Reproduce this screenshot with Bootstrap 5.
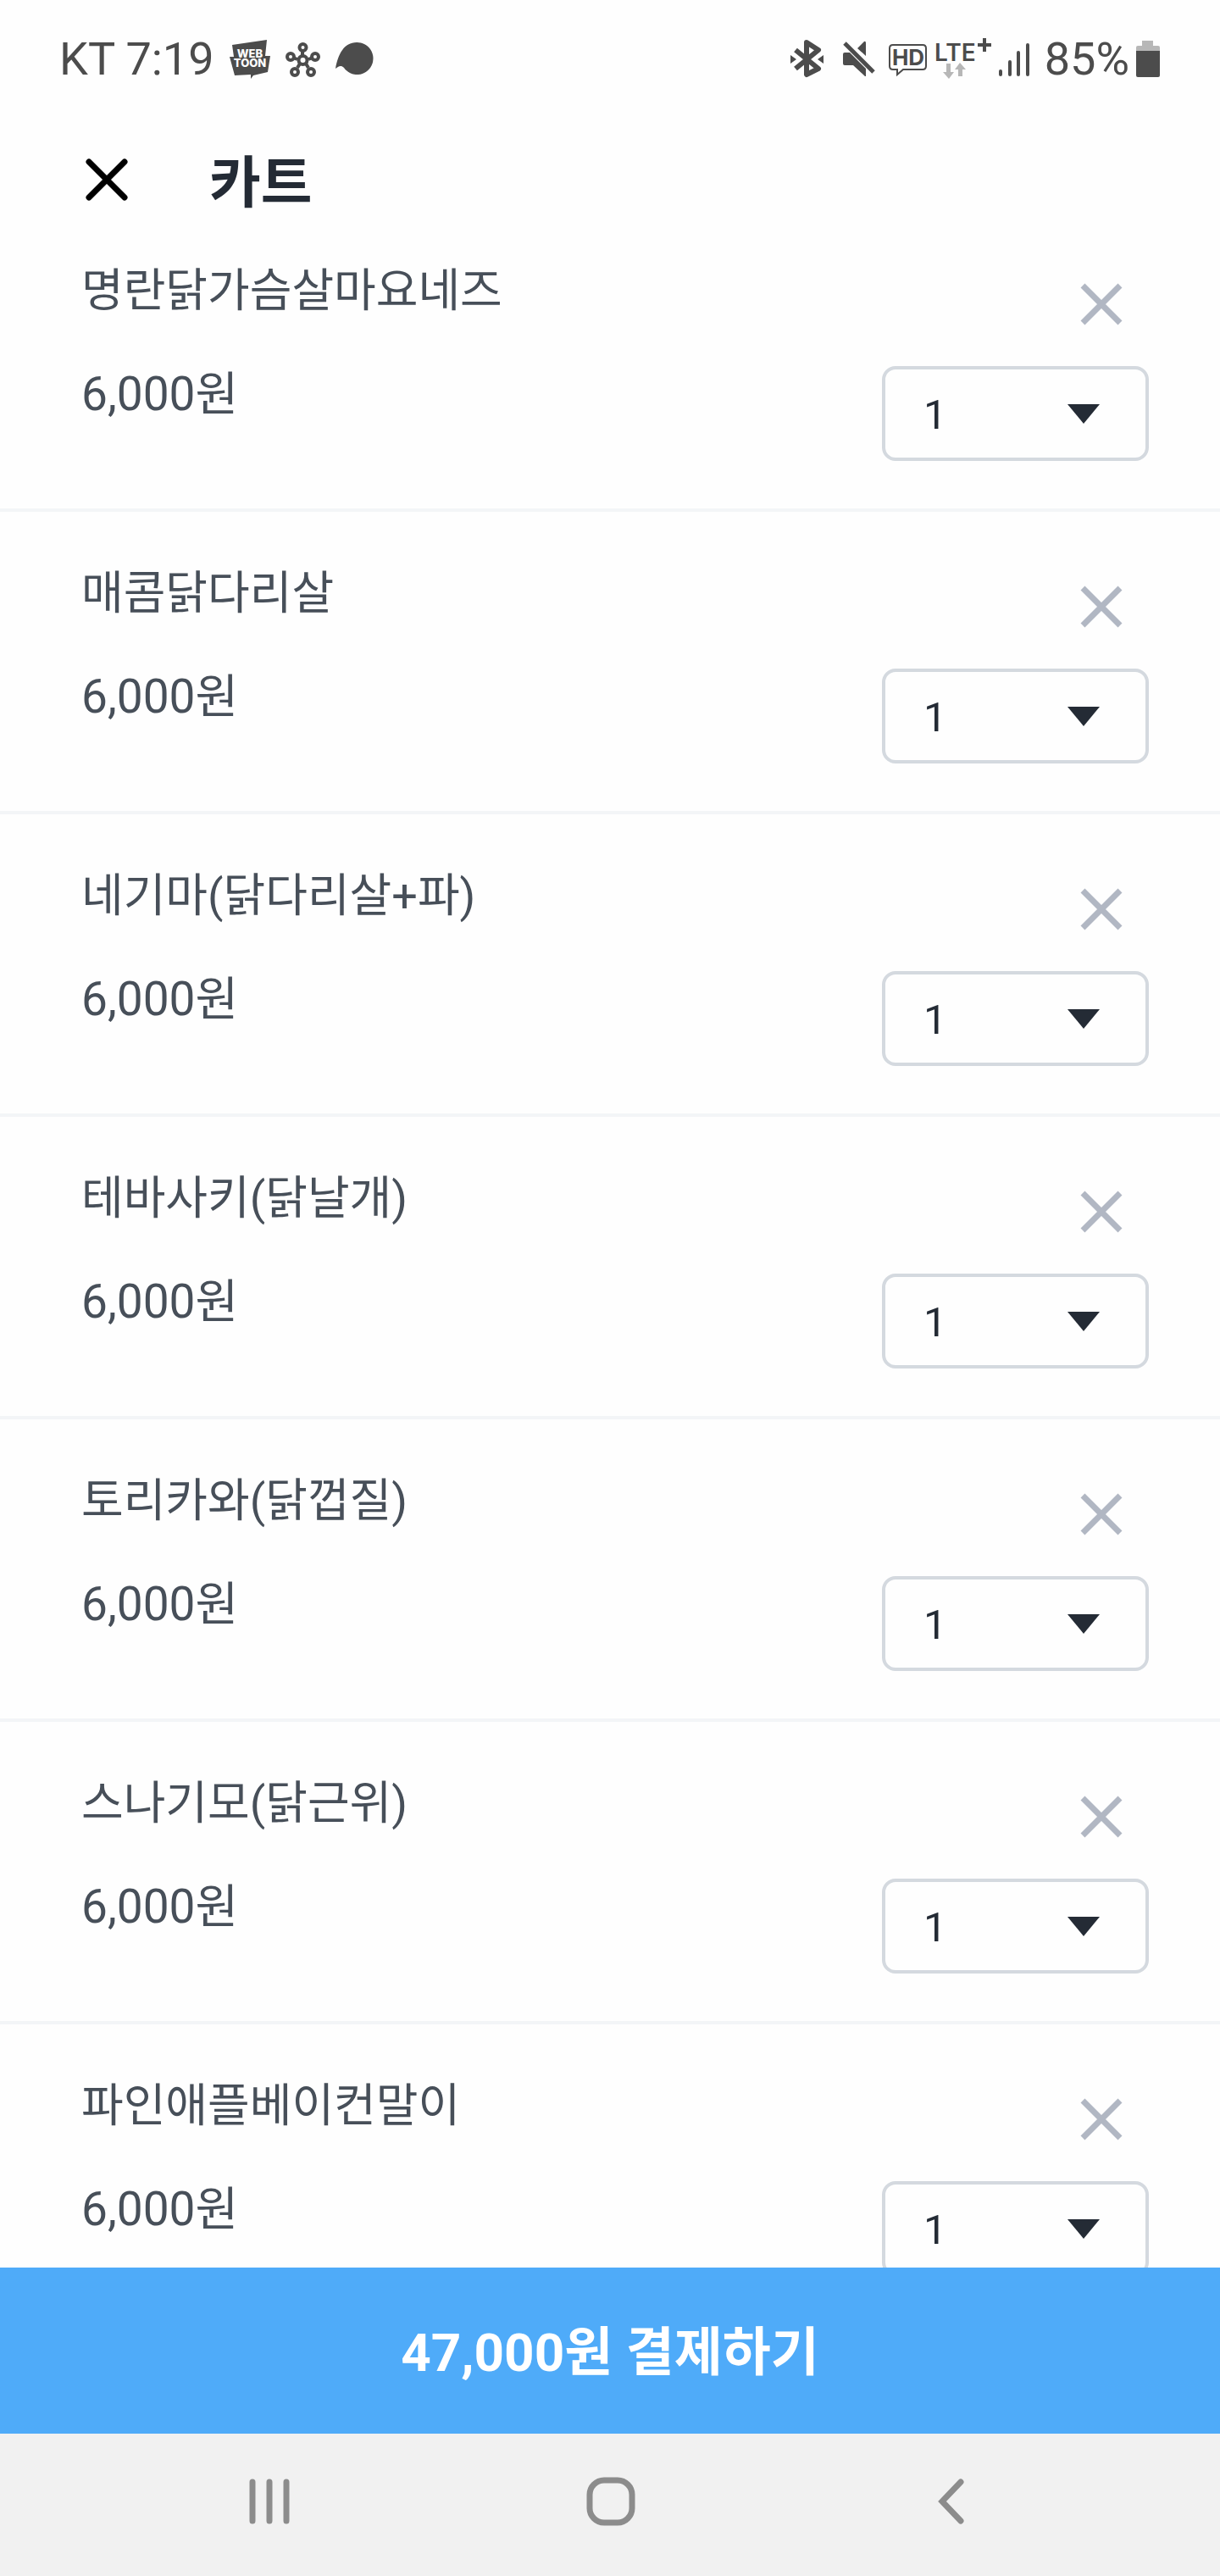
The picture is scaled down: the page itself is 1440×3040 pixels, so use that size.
<!DOCTYPE html>
<html lang="ko">
<head>
<meta charset="utf-8">
<meta name="viewport" content="width=device-width, initial-scale=1">
<title>카트</title>
<link rel="stylesheet" href="https://cdn.jsdelivr.net/npm/bootstrap@5.3.0/dist/css/bootstrap.min.css">
<style>
  body { font-family: Roboto, "Noto Sans CJK KR", sans-serif; background: #fefefe; color: #242b35; }
  svg { display: block; flex: none; overflow: visible; }
  .status-bar { height: 140px; padding: 0 71px 0 70px; font-size: 54px; line-height: 60px; color: #4c4c4c; }
  .status-left { gap: 16px; }
  .status-icons { gap: 8px; }
  .status-icons .wide-gap { margin-left: 12px; }
  .app-header { height: 107px; padding: 0 97px; gap: 92px; }
  .app-title { font-size: 66px; line-height: 60px; font-weight: 700; }
  .icon-btn { padding: 0; border: 0; background: none; }
  .list-area { min-height: 0; }
  .cart-item { padding: 61px 84px 56px 96px; border-bottom: 4px solid #f3f5f7; }
  .item-text { gap: 49px; color: #474f59; }
  .item-name { font-size: 54px; line-height: 72px; }
  .item-price { font-size: 55px; line-height: 72px; }
  .item-actions { padding-top: 15px; gap: 37px; }
  .remove-btn { margin-right: 20px; }
  .qty-select {
    width: 315px; height: 112px; padding: 4px 100px 0 45px;
    border: 4px solid #d4d9df; border-radius: 16px; color: #242b35;
    font-size: 49px; line-height: 60px;
    background-image: url("data:image/svg+xml,%3Csvg xmlns='http://www.w3.org/2000/svg' viewBox='0 0 38 23'%3E%3Cpath fill='%23242b35' d='M0 0H38L19 23Z'/%3E%3C/svg%3E");
    background-position: right 54px center; background-size: 38px 23px; background-color: #fefefe;
  }
  .pay-btn, .pay-btn:hover { height: 196px; padding: 6px 0 0; font-size: 62px; line-height: 72px; font-weight: 700; background: #4fabf9; color: #fff; border: 0; }
  .system-nav { height: 168px; padding: 0 117px 8px; background: #f1f1f1; }
</style>
</head>
<body>
<div class="d-flex flex-column vh-100 overflow-hidden">
  <div class="status-bar d-flex align-items-center justify-content-between flex-shrink-0">
    <div class="status-left d-flex align-items-center">
      <span>KT 7:19</span>
      <svg width="51" height="56" viewBox="269 40 51 56" role="img" aria-label="WEBTOON">
        <path fill="#4c4c4c" d="M274 51 315 45 313 64H319L316 83 299 87 296 91V86L277 87 271 65H276Z"/>
        <g fill="#fefefe" font-family="Inter, sans-serif" font-weight="800" text-anchor="middle">
          <text x="295" y="66" font-size="13">WEB</text><text x="295" y="77" font-size="13">TOON</text>
        </g>
      </svg>
      <svg width="44" height="56" viewBox="336 40 44 56" fill="none" stroke="#4c4c4c" stroke-width="4">
        <path d="M357 58V64M346 66 351 68M369 66 364 68M351 78 354 73M364 78 361 73"/>
        <circle cx="357.500" cy="69" r="5"/><circle cx="357.500" cy="54" r="4"/><circle cx="343" cy="65" r="4"/><circle cx="372" cy="65" r="4"/><circle cx="348" cy="83" r="4"/><circle cx="367" cy="83" r="4"/>
      </svg>
      <svg width="46" height="56" viewBox="396 40 46 56" fill="#4c4c4c"><path d="M421 48A19 19 0 1 1 406 78C402 74 399 77 396 79 399 62 406 48 421 48Z"/></svg>
    </div>
    <div class="status-icons d-flex align-items-center">
      <svg width="40" height="56" viewBox="932 40 40 56" fill="none" stroke="#4c4c4c" stroke-width="6">
        <path stroke-linejoin="round" d="M938 57 965 79 951 86V48L965 57 938 79"/>
        <path fill="#4c4c4c" stroke="none" d="M932 63 939 68 932 73ZM971 63 964 68 971 73Z"/>
      </svg>
      <svg class="wide-gap" width="40" height="56" viewBox="993 40 40 56" fill="#4c4c4c">
        <path d="M997 60H1003L1022 79V88H1021L1007 75H997Q995 75 995 73V62Q995 60 997 60ZM1012 55 1020 47Q1022 46 1022 49V64Z"/>
        <path stroke="#4c4c4c" stroke-width="5" d="M997 49 1031 83"/>
      </svg>
      <svg width="54" height="56" viewBox="1041 40 54 56" role="img" aria-label="HD">
        <path fill="none" stroke="#4c4c4c" stroke-width="2" d="M1054 51H1089Q1093 51 1093 55V76Q1093 80 1089 80H1066L1059 86V80H1054Q1050 80 1050 76V55Q1050 51 1054 51Z"/>
        <text x="1072" y="75" fill="#4c4c4c" font-family="Inter, sans-serif" font-weight="700" font-size="26" text-anchor="middle">HD</text>
      </svg>
      <svg width="68" height="60" viewBox="1103 38 68 60" role="img" aria-label="LTE+">
        <text x="1103" y="70" fill="#4c4c4c" font-family="Inter, sans-serif" font-weight="600" font-size="28">LTE</text>
        <path stroke="#4c4c4c" stroke-width="4" d="M1154 51H1170M1162 43V59"/>
        <path fill="#b7b7b7" d="M1117 73H1122V83H1126L1120 91 1113 83H1117ZM1131 88H1136V80H1140L1133 72 1127 80H1131Z"/>
      </svg>
      <svg width="38" height="56" viewBox="1179 40 38 56" stroke="#4c4c4c" stroke-width="4" stroke-linecap="round"><path d="M1181 82V86M1192 71V86M1202 60V86M1213 51V86"/></svg>
      <span class="ms-2">85%</span>
      <svg width="28" height="56" viewBox="1340 40 28 56"><path fill="#b7b7b7" d="M1347 46H1360V52H1366Q1368 52 1368 54V59H1340V54Q1340 52 1342 52H1347Z"/><path fill="#4c4c4c" d="M1340 58H1368V87Q1368 89 1366 89H1342Q1340 89 1340 87Z"/></svg>
    </div>
  </div>

  <header class="app-header d-flex align-items-end flex-shrink-0">
    <button class="icon-btn" type="button" aria-label="닫기"><svg width="58" height="70" viewBox="0 0 58 70" stroke="#000" stroke-width="7" stroke-linecap="round"><path d="M8 14 50 56M50 14 8 56"/></svg></button>
    <h1 class="app-title m-0">카트</h1>
  </header>

  <main class="list-area flex-fill overflow-hidden">
    <ul class="list-unstyled m-0" id="cartList"></ul>
  </main>

  <button class="pay-btn btn rounded-0 w-100 flex-shrink-0" type="button">47,000원 결제하기</button>

  <nav class="system-nav d-flex align-items-center flex-shrink-0" aria-label="시스템">
    <button class="icon-btn flex-fill d-flex justify-content-center" type="button" aria-label="최근 앱"><svg width="60" height="60" viewBox="0 0 60 60" stroke="#8c8c8c" stroke-width="7" stroke-linecap="round"><path d="M10 7V53M30 7V53M50 7V53"/></svg></button>
    <button class="icon-btn flex-fill d-flex justify-content-center" type="button" aria-label="홈"><svg width="60" height="60" viewBox="0 0 60 60" fill="none" stroke="#8c8c8c" stroke-width="7"><rect x="6" y="5" width="50" height="50" rx="17"/></svg></button>
    <button class="icon-btn flex-fill d-flex justify-content-center" type="button" aria-label="뒤로"><svg width="60" height="60" viewBox="0 0 60 60" fill="none" stroke="#8c8c8c" stroke-width="7" stroke-linecap="round"><path d="M42 7 20 30 42 53"/></svg></button>
  </nav>
</div>
<script src="https://cdn.jsdelivr.net/npm/bootstrap@5.3.0/dist/js/bootstrap.bundle.min.js"></script>
<script>
  const names = ["명란닭가슴살마요네즈", "매콤닭다리살", "네기마(닭다리살+파)", "테바사키(닭날개)", "토리카와(닭껍질)", "스나기모(닭근위)", "파인애플베이컨말이"];
  document.getElementById("cartList").innerHTML = names.map((name, i) => `
    <li class="cart-item d-flex justify-content-between">
      <div class="item-text d-flex flex-column">
        <label class="item-name" for="qty${i}">${name}</label>
        <span class="item-price">6,000원</span>
      </div>
      <div class="item-actions d-flex flex-column align-items-end">
        <button class="icon-btn remove-btn" type="button" aria-label="${name} 삭제"><svg width="72" height="72" viewBox="0 0 72 72" stroke="#b1b7c3" stroke-width="7"><path d="M14 14 58 58M58 14 14 58"/></svg></button>
        <select class="form-select qty-select" id="qty${i}"><option>1</option><option>2</option><option>3</option></select>
      </div>
    </li>`).join("");
</script>
</body>
</html>
